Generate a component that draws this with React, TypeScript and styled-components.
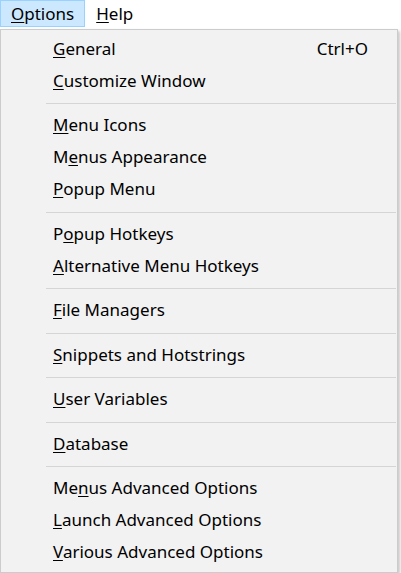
import React from "react";
import styled, { createGlobalStyle } from "styled-components";

const GlobalStyle = createGlobalStyle`
  html, body {
    margin: 0;
    padding: 0;
    background: #ffffff;
  }
  body {
    font-family: "Noto Sans", "Open Sans", sans-serif;
    color: #000000;
  }
`;

const Page = styled.div`
  width: 401px;
  height: 573px;
  overflow: hidden;
  display: flex;
  flex-direction: column;
  align-items: flex-start;
`;

const MenuBar = styled.div`
  display: flex;
  height: 27px;
  align-items: stretch;
`;

const BarItem = styled.div<{ $active?: boolean }>`
  box-sizing: border-box;
  height: 27px;
  line-height: 25px;
  font-size: 17px;
  padding: 0 10px 0 10px;
  border: 1px solid ${(p) => (p.$active ? "#99d1ff" : "transparent")};
  background: ${(p) => (p.$active ? "#cce8ff" : "transparent")};
  color: #000;
  white-space: nowrap;
`;

const Panel = styled.div`
  box-sizing: border-box;
  margin-top: 2px;
  width: 398px;
  border: 1px solid #cccccc;
  background: #f2f2f2;
  padding: 2px 0 4px 0;
  display: flex;
  flex-direction: column;
  box-shadow: 2px 2px 3px rgba(0, 0, 0, 0.22);
`;

const Item = styled.div`
  display: flex;
  align-items: center;
  justify-content: space-between;
  height: 32px;
  padding: 0 29px 0 52px;
  font-size: 17px;
  color: #000;
  white-space: nowrap;
`;

const Shortcut = styled.span`
  font-size: 17px;
  color: #000;
`;

const Separator = styled.div`
  height: 1px;
  background: #d5d5d5;
  margin: 7px 1px 4.5px 45px;
`;

const Mn = styled.u`
  text-decoration-thickness: 1px;
  text-underline-offset: 2px;
`;

type Entry =
  | { kind: "item"; label: string; key: number; shortcut?: string }
  | { kind: "sep" };

const entries: Entry[] = [
  { kind: "item", label: "General", key: 0, shortcut: "Ctrl+O" },
  { kind: "item", label: "Customize Window", key: 0 },
  { kind: "sep" },
  { kind: "item", label: "Menu Icons", key: 0 },
  { kind: "item", label: "Menus Appearance", key: 1 },
  { kind: "item", label: "Popup Menu", key: 0 },
  { kind: "sep" },
  { kind: "item", label: "Popup Hotkeys", key: 1 },
  { kind: "item", label: "Alternative Menu Hotkeys", key: 0 },
  { kind: "sep" },
  { kind: "item", label: "File Managers", key: 0 },
  { kind: "sep" },
  { kind: "item", label: "Snippets and Hotstrings", key: 0 },
  { kind: "sep" },
  { kind: "item", label: "User Variables", key: 0 },
  { kind: "sep" },
  { kind: "item", label: "Database", key: 0 },
  { kind: "sep" },
  { kind: "item", label: "Menus Advanced Options", key: 2 },
  { kind: "item", label: "Launch Advanced Options", key: 0 },
  { kind: "item", label: "Various Advanced Options", key: 0 },
];

const Label: React.FC<{ text: string; k: number }> = ({ text, k }) => (
  <span>
    {text.slice(0, k)}
    <Mn>{text[k]}</Mn>
    {text.slice(k + 1)}
  </span>
);

export default function App() {
  return (
    <Page>
      <GlobalStyle />
      <MenuBar>
        <BarItem $active>
          <Label text="Options" k={0} />
        </BarItem>
        <BarItem>
          <Label text="Help" k={0} />
        </BarItem>
      </MenuBar>
      <Panel>
        {entries.map((e, i) =>
          e.kind === "sep" ? (
            <Separator key={i} />
          ) : (
            <Item key={i}>
              <Label text={e.label} k={e.key} />
              {e.shortcut && <Shortcut>{e.shortcut}</Shortcut>}
            </Item>
          )
        )}
      </Panel>
    </Page>
  );
}
